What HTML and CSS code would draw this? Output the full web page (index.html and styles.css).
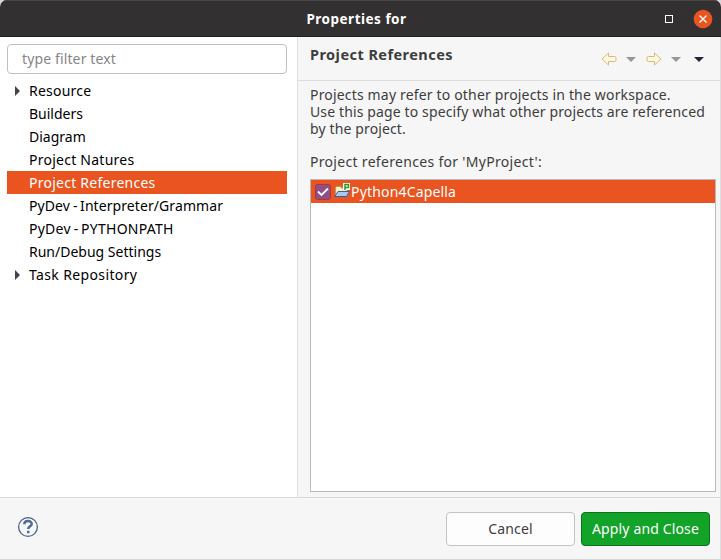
FILE: index.html
```html
<!DOCTYPE html>
<html lang="en">
<head>
<meta charset="utf-8">
<title>Properties for</title>
<link rel="stylesheet" href="styles.css">
</head>
<body>
<div class="window">
  <header class="titlebar">
    <h1 class="title">Properties for</h1>
    <div class="window-controls">
      <svg width="10" height="10" viewBox="0 0 10 10"><rect x="1.5" y="1.5" width="7" height="7" fill="none" stroke="#fff"/></svg>
      <svg width="20" height="20" viewBox="0 0 20 20"><circle cx="10" cy="10" r="9.3" fill="#e95420"/><path d="M6.5 6.5l7 7M13.5 6.5l-7 7" stroke="#fff" stroke-width="1.4"/></svg>
    </div>
  </header>
  <div class="content">
    <nav class="sidebar">
      <div class="filter"><span class="w-filter">type filter text</span></div>
      <ul class="tree">
        <li class="parent"><span class="w-resource">Resource</span></li>
        <li><span>Builders</span></li>
        <li><span>Diagram</span></li>
        <li><span class="w-natures">Project Natures</span></li>
        <li class="selected"><span class="w-refs">Project References</span></li>
        <li><span class="w-dev">PyDev<i>-</i>Interpreter/Grammar</span></li>
        <li><span class="w-path">PyDev<i>-</i>PYTHONPATH</span></li>
        <li><span>Run/Debug Settings</span></li>
        <li class="parent"><span class="w-task">Task Repository</span></li>
      </ul>
    </nav>
    <main class="page">
      <div class="page-head">
        <h2>Project References</h2>
        <svg class="nav-icons" width="108" height="16" viewBox="0 0 108 16">
          <path d="M1 8L7.500 2V5.500H13.500Q15 5.500 15 7V9Q15 10.500 13.500 10.500H7.500V14Z" fill="#fff9e4" stroke="#dcb878" stroke-linejoin="round"/>
          <path d="M25 6h10l-5 5z" fill="#979797"/>
          <path d="M60 8L53.500 2V5.500H47.500Q46 5.500 46 7V9Q46 10.500 47.500 10.500H53.500V14Z" fill="#fff9e4" stroke="#dcb878" stroke-linejoin="round"/>
          <path d="M70 6h10l-5 5z" fill="#979797"/>
          <path d="M93 6h10l-5 5z" fill="#2c2040"/>
        </svg>
      </div>
      <div class="page-body">
        <p class="description"><span class="w-l1">Projects may refer to other projects in the workspace.</span><span class="w-l2">Use this page to specify what other projects are referenced</span><span class="w-l2">by the project.</span></p>
        <p class="list-label">Project references for 'MyProject':</p>
        <div class="list">
          <div class="list-row">
            <svg width="16" height="16" viewBox="0 0 16 16"><rect x=".5" y=".5" width="15" height="15" rx="2" fill="#924d8b" stroke="#a03c35"/><path d="M3 7.500l3.500 3.500L13 4.500" fill="none" stroke="#fff" stroke-width="1.800"/></svg>
            <svg class="folder" width="16" height="16" viewBox="0 0 16 16"><path d="M1.500 13V4.500l1-1h4l1 1.500h5.500v8z" fill="#fdf0bb" stroke="#bd9b58"/><path d="M.8 13.500L4 8.500h11.500L12.500 13.500z" fill="#a8c9f3" stroke="#365f9e"/><path d="M9 0h7v7H9z" fill="#fff"/><path d="M11 7V1.500h3.500V4.500H11" fill="none" stroke="#279a25" stroke-width="1.500"/></svg>
            <span class="w-python">Python4Capella</span>
          </div>
        </div>
      </div>
    </main>
  </div>
  <footer class="footer">
    <svg class="help" width="22" height="22" viewBox="0 0 22 22"><circle cx="11" cy="11" r="9.400" fill="#f5f7fa" stroke="#4d6388" stroke-width="1.300"/><path d="M7.300 8.300C7.300 4 14.700 4 14.700 8C14.700 10.300 11.200 10.300 11.200 13" fill="none" stroke="#526b94" stroke-width="2.500"/><path d="M10 14.800h2.500v2.400H10z" fill="#526b94"/></svg>
    <div class="buttons">
      <button class="button">Cancel</button>
      <button class="button primary">Apply and Close</button>
    </div>
  </footer>
</div>
</body>
</html>
```
FILE: styles.css
```css
* { box-sizing: border-box; }
body { margin: 0; background: #d6d6d6; font: 14px/17px "Noto Sans", sans-serif; color: #3d3d3d; }
h1, h2, p, ul { margin: 0; padding: 0; font-size: 14px; }
span { display: block; white-space: nowrap; }
svg { display: block; flex: none; }
.window { width: 721px; height: 560px; display: flex; flex-direction: column; border-radius: 7px 7px 0 0; overflow: hidden; background: #f6f6f6; border-bottom: 1px solid #d5d5d5; }
.titlebar { height: 37px; flex: none; display: grid; grid-template-columns: 1fr auto 1fr; align-items: center; background: #323030; border-top: 1px solid #484644; border-bottom: 1px solid #211f1f; color: #fff; }
.title { grid-column: 2; margin: 2px 8px 0 0; font-size: 13.500px; letter-spacing: .5px; }
.window-controls { display: flex; gap: 19px; align-items: center; justify-content: flex-end; padding-right: 8px; }
.content { display: flex; height: 460px; }
.sidebar { width: 298px; padding: 7px 10px 0 7px; background: #fff; border-right: 1px solid #e0e0e0; }
.filter { height: 30px; border: 1px solid #c1c1c1; border-radius: 4px; padding: 5px 14px; color: #858585; }
.tree { list-style: none; margin-top: 5px; color: #000; }
.tree li { height: 23px; padding: 3px 0 0 22px; }
.tree .selected { background: #e95420; color: #fff; }
.tree .parent { display: flex; align-items: flex-start; padding-left: 8px; }
.tree i { font-style: normal; margin: 0 2.500px 0 3px; }
.parent::before { content: ""; border-left: 5px solid #444; border-top: 5px solid transparent; border-bottom: 5px solid transparent; margin: 4px 9px 0 0; }
.page { flex: 1; display: flex; flex-direction: column; border-right: 1px solid #dedede; }
.page-head { height: 44px; display: flex; justify-content: space-between; padding: 9px 11px 0 12px; border-bottom: 1px solid #dcdcdc; }
.page-head h2 { font-size: 14.500px; letter-spacing: .45px; }
.nav-icons { margin-top: 5px; }
.page-body { flex: 1; display: flex; flex-direction: column; padding: 5px 4px 5px 12px; }
.list-label { margin: 16px 0 9px; letter-spacing: .31px; }
.list { flex: 1; background: #fff; border: 1px solid #b9b9b9; }
.list-row { height: 23px; display: flex; align-items: center; padding-left: 4px; background: #e95420; color: #fff; }
.folder { margin: -2px 1px 0 3px; }
.footer { flex: 1; display: flex; justify-content: space-between; align-items: center; padding: 0 10px 0 17px; border-top: 1px solid #dadada; border-right: 1px solid #dedede; }
.help { margin-bottom: 3px; }
.buttons { display: flex; gap: 6px; }
.button { width: 129px; height: 34px; padding: 0; border: 1px solid #c3c3c3; border-radius: 4px; background: #fdfdfd; color: #3d3d3d; font: inherit; letter-spacing: .14px; }
.primary { background: #12a329; border-color: #0a721b; color: #fff; }
.w-filter, .w-l2 { letter-spacing: .13px; }
.w-l1, .w-python { letter-spacing: .17px; }
.w-resource { letter-spacing: .22px; }
.w-natures, .w-refs { letter-spacing: .25px; }
.w-dev { letter-spacing: .08px; }
.w-path { letter-spacing: .25px; }
.w-task { letter-spacing: .37px; }
```
